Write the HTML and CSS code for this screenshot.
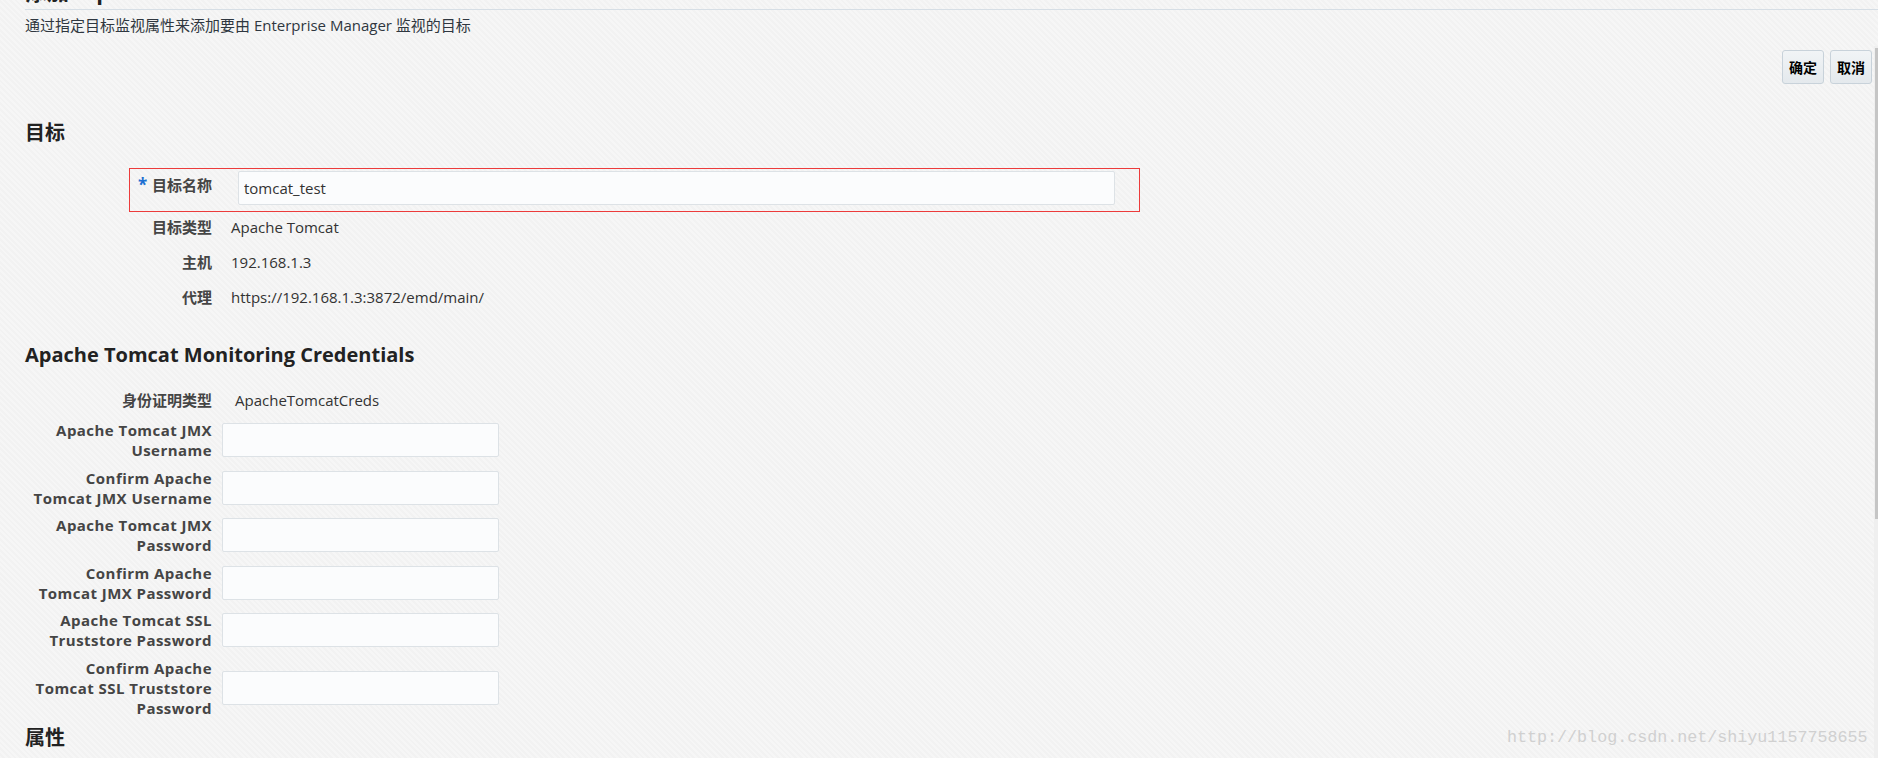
FILE: index.html
```html
<!DOCTYPE html>
<html lang="zh-CN">
<head>
<meta charset="utf-8">
<title>添加: Apache Tomcat</title>
<link rel="stylesheet" href="styles.css">
</head>
<body>
<div class="page">
  <header class="title-bar"><h1 class="title">添加: Apache Tomcat</h1></header>
  <p class="desc">通过指定目标监视属性来添加要由 Enterprise Manager 监视的目标</p>
  <div class="actions">
    <button class="btn" type="button">确定</button>
    <button class="btn" type="button">取消</button>
  </div>

  <h2 class="section-title s1">目标</h2>
  <div class="form1">
    <div class="highlight">
      <label class="lbl1 req-lbl"><span class="req">*</span><span class="req-text">目标名称</span></label>
      <input class="field wide" type="text" value="tomcat_test">
    </div>
    <div class="row1"><span class="lbl1">目标类型</span><span class="val1">Apache Tomcat</span></div>
    <div class="row1"><span class="lbl1">主机</span><span class="val1">192.168.1.3</span></div>
    <div class="row1"><span class="lbl1">代理</span><span class="val1">https://192.168.1.3:3872/emd/main/</span></div>
  </div>

  <h2 class="section-title s2">Apache Tomcat Monitoring Credentials</h2>
  <div class="form2">
    <div class="row2 first"><span class="lbl2">身份证明类型</span><span class="val2">ApacheTomcatCreds</span></div>
    <div class="row2"><span class="lbl2 latin">Apache Tomcat JMX<br>Username</span><input class="field narrow" type="text"></div>
    <div class="row2"><span class="lbl2 latin">Confirm Apache<br>Tomcat JMX Username</span><input class="field narrow" type="text"></div>
    <div class="row2"><span class="lbl2 latin">Apache Tomcat JMX<br>Password</span><input class="field narrow" type="password"></div>
    <div class="row2"><span class="lbl2 latin">Confirm Apache<br>Tomcat JMX Password</span><input class="field narrow" type="password"></div>
    <div class="row2"><span class="lbl2 latin">Apache Tomcat SSL<br>Truststore Password</span><input class="field narrow" type="password"></div>
    <div class="row2"><span class="lbl2 latin">Confirm Apache<br>Tomcat SSL Truststore<br>Password</span><input class="field narrow" type="password"></div>
  </div>

  <h2 class="section-title s3">属性</h2>
</div>
<div class="scroll-track"><div class="scroll-thumb"></div></div>
<div class="watermark">http://blog.csdn.net/shiyu1157758655</div>
</body>
</html>
```

FILE: styles.css
```css
html, body {
  margin: 0;
  height: 100%;
  overflow: hidden;
}
body {
  font-family: "Open Sans", "Noto Sans CJK SC", sans-serif;
  font-size: 15px;
  color: #333;
  background-color: #f5f5f5;
  background-image: repeating-linear-gradient(45deg, #f6f6f6 0 2px, #f2f2f2 2px 4px);
  position: relative;
}
.page {
  padding-left: 25px;
}
.title-bar {
  border-bottom: 1px solid #d6dee5;
  padding-bottom: 4px;
}
.title {
  margin: -22px 0 0 0;
  font-size: 22px;
  line-height: 27px;
  font-weight: bold;
  color: #222;
}
.desc {
  margin: 5px 0 0 0;
  line-height: 20px;
  color: #2f3740;
}
.actions {
  display: flex;
  justify-content: flex-end;
  gap: 6px;
  margin-top: 15px;
  padding-right: 6px;
}
.btn {
  width: 42px;
  height: 34px;
  padding: 0;
  border: 1px solid #c8d2da;
  border-radius: 3px;
  background: linear-gradient(#f1f4f6, #e4e9ed);
  font-family: "Noto Sans CJK SC", sans-serif;
  font-size: 14px;
  font-weight: bold;
  color: #000;
}
.section-title {
  margin: 0;
  font-size: 20px;
  line-height: 24px;
  font-weight: bold;
  color: #222;
}
.s1 { margin-top: 37px; }
.s2 { margin-top: 26px; }
.s3 { margin-top: 5px; }

.form1 {
  margin-top: 23px;
  margin-left: 104px;
}
.highlight {
  display: flex;
  width: fit-content;
  border: 1px solid #ec3b3b;
  padding: 2px 24px 6px 0;
}
.lbl1 {
  width: 83px;
  text-align: right;
  font-weight: bold;
  color: #454545;
  line-height: 20px;
  flex: none;
}
.req-lbl {
  width: 82px;
  box-sizing: border-box;
  display: flex;
  align-items: flex-start;
  padding: 4px 0 0 8px;
}
.req {
  color: #1c6fd1;
  font-size: 17px;
  line-height: 20px;
}
.req-text {
  margin-left: auto;
}
.field {
  box-sizing: border-box;
  height: 34px;
  border: 1px solid #dde2e6;
  border-radius: 2px;
  background: #fbfcfd;
  font-family: "Open Sans", "Noto Sans CJK SC", sans-serif;
  font-size: 15px;
  color: #333;
  padding: 0 5px;
  outline: none;
}
.wide {
  width: 877px;
  margin-left: 26px;
}
.row1 {
  display: flex;
  padding: 5px 0 10px 0;
  line-height: 20px;
}
.val1 {
  margin-left: 19px;
}

.form2 {
  margin-top: 18px;
}
.row2 {
  display: flex;
  align-items: center;
  padding: 4px 0 3.5px 0;
}
.row2.first {
  padding: 5px 0 6px 0;
}
.lbl2 {
  width: 187px;
  text-align: right;
  font-weight: bold;
  color: #454545;
  line-height: 20px;
  flex: none;
}
.lbl2.latin {
  letter-spacing: 0.45px;
}
.val2 {
  margin-left: 23px;
  line-height: 20px;
}
.narrow {
  width: 277px;
  margin-left: 10px;
}

.scroll-track {
  position: absolute;
  top: 46px;
  right: 0;
  width: 4px;
  bottom: 0;
  background: #efefef;
}
.scroll-thumb {
  margin-top: 2px;
  margin-left: 1px;
  width: 3px;
  height: 471px;
  background: #c5c5c5;
}
.watermark {
  position: absolute;
  left: 1507px;
  top: 728px;
  font-family: "Liberation Mono", monospace;
  font-size: 16.7px;
  line-height: 20px;
  color: #d0d0d0;
  white-space: nowrap;
}
```
